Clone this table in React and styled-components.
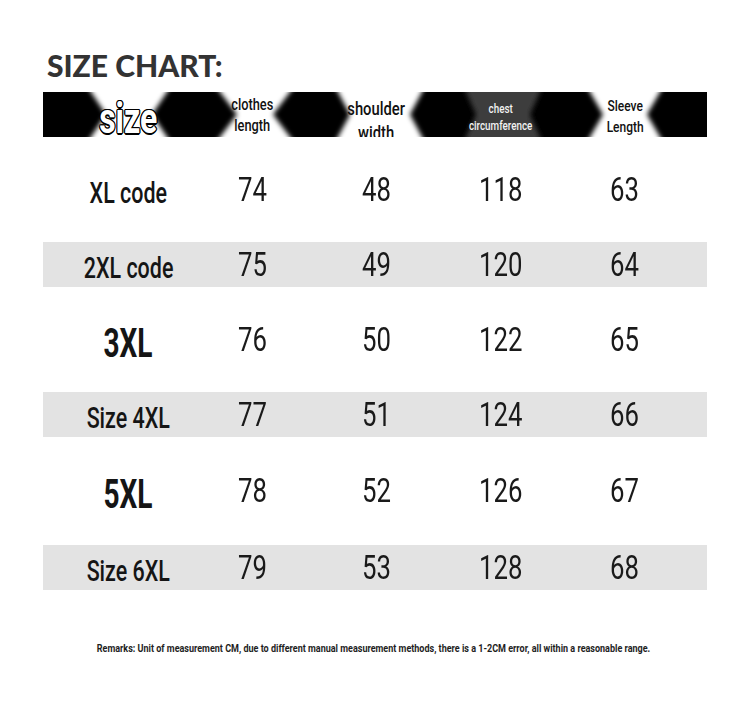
import React from "react";
import styled, { createGlobalStyle } from "styled-components";

const GlobalStyle = createGlobalStyle`
	body {
		margin: 0;
		background: #ffffff;
		font-family: Roboto, "Liberation Sans", sans-serif;
	}
`;

const Page = styled.div`
	width: 750px;
	height: 720px;
	box-sizing: border-box;
	padding: 47px 43px 0 43px;
	background: #fff;
`;

const Title = styled.h1`
	margin: 0 0 9px 4px;
	font-family: Lato, "Open Sans", sans-serif;
	font-weight: 900;
	font-size: 30px;
	line-height: 36px;
	color: #333;
	letter-spacing: 0;
`;

const Table = styled.div`
	width: 664px;
`;

const HeaderBar = styled.div`
	position: relative;
	height: 45px;
	background: #000;
`;

const BarArt = styled.svg`
	position: absolute;
	inset: 0;
	width: 100%;
	height: 100%;
	overflow: hidden;
`;

const Row = styled.div`
	position: relative;
	display: grid;
	grid-template-columns: repeat(5, 1fr);
	align-items: center;
	height: ${(p) => p.$h}px;
	padding: 0 20px 0 23px;
	background: ${(p) => (p.$shade ? "#e3e3e3" : p.$clear ? "transparent" : "#ffffff")};
`;

const Cell = styled.div`
	display: flex;
	justify-content: center;
	align-items: center;
	white-space: nowrap;
`;

// condensed look: there is no condensed face installed, so squeeze horizontally
const Squeeze = styled.span`
	display: inline-block;
	transform: translateY(${(p) => p.$dy || 0}px) scaleX(${(p) => p.$x || 0.78});
	transform-origin: center;
`;

const Num = styled(Squeeze)`
	font-size: 33px;
	line-height: 40px;
	font-weight: 400;
	color: #1a1a1a;
`;

const Label = styled(Squeeze)`
	font-size: ${(p) => (p.$big ? 40 : 29)}px;
	line-height: 44px;
	font-weight: ${(p) => (p.$big ? 700 : 500)};
	color: #151515;
`;

const HeadText = styled(Squeeze)`
	font-size: ${(p) => p.$size}px;
	line-height: ${(p) => p.$lh}px;
	font-weight: 500;
	text-align: center;
	color: ${(p) => (p.$light ? "#f2f2f2" : "#111")};
`;

const SizeWord = styled(Squeeze)`
	font-size: 42px;
	line-height: 44px;
	font-weight: 700;
	color: #fff;
	text-shadow:
		-1.5px 0 0 #000,
		1.5px 0 0 #000,
		0 -1.5px 0 #000,
		0 1.5px 0 #000,
		-1px -1px 0 #000,
		1px -1px 0 #000,
		-1px 1px 0 #000,
		1px 1px 0 #000;
`;

const Remarks = styled.p`
	display: flex;
	justify-content: center;
	margin: 51px 3px 0 0;
	font-size: 11px;
	line-height: 14px;
	font-weight: 700;
	color: #1e1e1e;
	white-space: nowrap;
`;

const gaps = [
	{ c: 86, tw: 38, mw: 23, fill: "#fff" },
	{ c: 212, tw: 35, mw: 18, fill: "#fff" },
	{ c: 337, tw: 42, mw: 30, fill: "#fff" },
	{ c: 460, tw: 37, mw: 27, fill: "#3d3d3d" },
	{ c: 582, tw: 35, mw: 22, fill: "#fff" },
];

const bowtie = ({ c, tw, mw }) => {
	const h = 45;
	const ext = 12;
	const k = (tw - mw) / (h / 2);
	const o = tw + k * ext;
	return [
		[c - o, -ext],
		[c + o, -ext],
		[c + mw, h / 2],
		[c + o, h + ext],
		[c - o, h + ext],
		[c - mw, h / 2],
	]
		.map((p) => p.join(","))
		.join(" ");
};

const rows = [
	{ label: "XL code", v: [74, 48, 118, 63], h: 105 },
	{ label: "2XL code", v: [75, 49, 120, 64], h: 45, shade: true },
	{ label: "3XL", v: [76, 50, 122, 65], h: 105, big: true },
	{ label: "Size 4XL", v: [77, 51, 124, 66], h: 45, shade: true },
	{ label: "5XL", v: [78, 52, 126, 67], h: 108, big: true },
	{ label: "Size 6XL", v: [79, 53, 128, 68], h: 45, shade: true },
];

const App = () => {
	return (
		<Page>
			<GlobalStyle />
			<Title>SIZE CHART:</Title>
			<Table>
				<HeaderBar>
					<BarArt viewBox="0 0 664 45" preserveAspectRatio="none">
						<defs>
							<filter id="soft" x="-20%" y="-50%" width="140%" height="200%">
								<feGaussianBlur stdDeviation="2.4" />
							</filter>
						</defs>
						<g filter="url(#soft)">
							{gaps.map((g) => (
								<polygon key={g.c} points={bowtie(g)} fill={g.fill} />
							))}
						</g>
					</BarArt>
					<Row $h={45} $clear>
						<Cell>
							<SizeWord $x={0.76} $dy={3}>size</SizeWord>
						</Cell>
						<Cell>
							<HeadText $size={16} $lh={21} $x={0.8} $dy={-1}>
								clothes
								<br />
								length
							</HeadText>
						</Cell>
						<Cell>
							<HeadText $size={18} $lh={24} $x={0.82} $dy={5}>
								shoulder
								<br />
								width
							</HeadText>
						</Cell>
						<Cell>
							<HeadText $size={12} $lh={17} $x={0.82} $light $dy={2}>
								chest
								<br />
								circumference
							</HeadText>
						</Cell>
						<Cell>
							<HeadText $size={15} $lh={21} $x={0.8} $dy={1}>
								Sleeve
								<br />
								Length
							</HeadText>
						</Cell>
					</Row>
				</HeaderBar>
				{rows.map((r) => (
					<Row key={r.label} $h={r.h} $shade={r.shade}>
						<Cell>
							<Label $big={r.big} $x={r.big ? 0.7 : 0.74} $dy={r.big ? 4 : 3}>
								{r.label}
							</Label>
						</Cell>
						{r.v.map((n, i) => (
							<Cell key={i}>
								<Num $x={0.78}>{n}</Num>
							</Cell>
						))}
					</Row>
				))}
			</Table>
			<Remarks>
				<Squeeze $x={0.82} $dy={1}>
					Remarks: Unit of measurement CM, due to different manual measurement methods, there is a 1-2CM error, all within a reasonable range.
				</Squeeze>
			</Remarks>
		</Page>
	);
};

export default App;
